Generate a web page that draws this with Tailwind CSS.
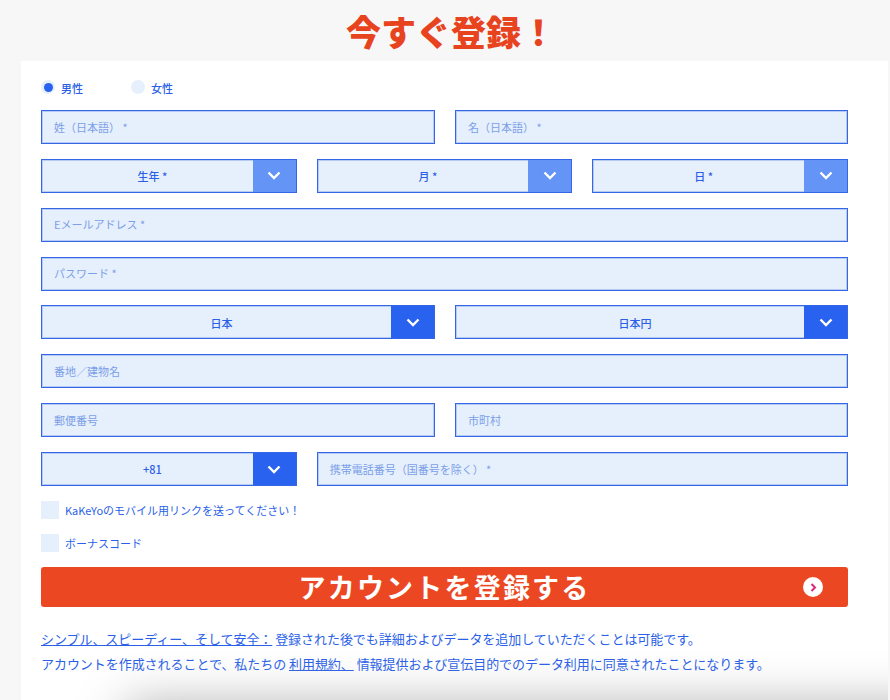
<!DOCTYPE html>
<html lang="ja">
<head>
    <meta charset="UTF-8">
    <title>今すぐ登録！</title>
    <script src="https://cdn.jsdelivr.net/npm/@tailwindcss/browser@4"></script>
</head>
<body class="h-[700px] overflow-hidden bg-[#f7f7f7] font-['Noto_Sans_CJK_JP','Noto_Sans',sans-serif] text-[#2a5fe8]">
    <h1 class="h-[61px] flex justify-center items-center pl-[12px] text-[35px] leading-none font-black text-[#e8431f]">今すぐ登録！</h1>

    <main class="relative ml-[21px] mr-[2px] h-[639px] overflow-hidden bg-white pl-[20px] pr-[40px]">
        <!-- Gender -->
        <div class="flex items-center h-[49px] pt-[5px] text-[11px] font-medium">
            <label class="flex items-center w-[90px]">
                <span class="w-[14px] h-[14px] mr-[6px] -mt-[2px] rounded-full bg-[#e6effc] flex items-center justify-center"><span class="w-[9px] h-[9px] rounded-full bg-[#2a62f0]"></span></span>
                男性
            </label>
            <label class="flex items-center">
                <span class="w-[14px] h-[14px] mr-[6px] -mt-[2px] rounded-full bg-[#e6effc]"></span>
                女性
            </label>
        </div>

        <div class="flex flex-col gap-[14.86px]">
            <div class="grid grid-cols-[394px_1fr] gap-[20px]">
                <div class="h-[34px] flex items-center px-[12px] border border-[#3566e6] shadow-[inset_0_0_0_1px_#b5cbf3] bg-[#e6effc] text-[11px] text-[#7ba0e8]">姓（日本語） *</div>
                <div class="h-[34px] flex items-center px-[12px] border border-[#3566e6] shadow-[inset_0_0_0_1px_#b5cbf3] bg-[#e6effc] text-[11px] text-[#7ba0e8]">名（日本語） *</div>
            </div>

            <div class="grid grid-cols-3 gap-[20px]">
                <div class="h-[34px] flex items-center border border-[#3566e6] shadow-[inset_0_0_0_1px_#b5cbf3] bg-[#e6effc] text-[11px] font-medium">
                    <span class="flex-1 pl-[10px] pt-[1px] text-center">生年 *</span>
                    <span class="w-[43px] h-full flex items-center justify-center bg-[#6494f5]"><svg width="14" height="9" viewBox="0 0 14 9" fill="none" stroke="white" stroke-width="2.4"><path d="M1.5 1.5 7 7l5.500-5.500"/></svg></span>
                </div>
                <div class="h-[34px] flex items-center border border-[#3566e6] shadow-[inset_0_0_0_1px_#b5cbf3] bg-[#e6effc] text-[11px] font-medium">
                    <span class="flex-1 pl-[10px] pt-[1px] text-center">月 *</span>
                    <span class="w-[43px] h-full flex items-center justify-center bg-[#6494f5]"><svg width="14" height="9" viewBox="0 0 14 9" fill="none" stroke="white" stroke-width="2.4"><path d="M1.5 1.5 7 7l5.500-5.500"/></svg></span>
                </div>
                <div class="h-[34px] flex items-center border border-[#3566e6] shadow-[inset_0_0_0_1px_#b5cbf3] bg-[#e6effc] text-[11px] font-medium">
                    <span class="flex-1 pl-[10px] pt-[1px] text-center">日 *</span>
                    <span class="w-[43px] h-full flex items-center justify-center bg-[#6494f5]"><svg width="14" height="9" viewBox="0 0 14 9" fill="none" stroke="white" stroke-width="2.4"><path d="M1.5 1.5 7 7l5.500-5.500"/></svg></span>
                </div>
            </div>

            <div class="h-[34px] flex items-center px-[12px] border border-[#3566e6] shadow-[inset_0_0_0_1px_#b5cbf3] bg-[#e6effc] text-[11px] text-[#7ba0e8]">Eメールアドレス *</div>
            <div class="h-[34px] flex items-center px-[12px] border border-[#3566e6] shadow-[inset_0_0_0_1px_#b5cbf3] bg-[#e6effc] text-[11px] text-[#7ba0e8]">パスワード *</div>

            <div class="grid grid-cols-[394px_1fr] gap-[20px]">
                <div class="h-[34px] flex items-center border border-[#3566e6] shadow-[inset_0_0_0_1px_#b5cbf3] bg-[#e6effc] text-[11px] font-medium">
                    <span class="flex-1 pl-[10px] pt-[1px] text-center">日本</span>
                    <span class="w-[43px] h-full flex items-center justify-center bg-[#2a62f0]"><svg width="14" height="9" viewBox="0 0 14 9" fill="none" stroke="white" stroke-width="2.4"><path d="M1.5 1.5 7 7l5.500-5.500"/></svg></span>
                </div>
                <div class="h-[34px] flex items-center border border-[#3566e6] shadow-[inset_0_0_0_1px_#b5cbf3] bg-[#e6effc] text-[11px] font-medium">
                    <span class="flex-1 pl-[10px] pt-[1px] text-center">日本円</span>
                    <span class="w-[43px] h-full flex items-center justify-center bg-[#2a62f0]"><svg width="14" height="9" viewBox="0 0 14 9" fill="none" stroke="white" stroke-width="2.4"><path d="M1.5 1.5 7 7l5.500-5.500"/></svg></span>
                </div>
            </div>

            <div class="h-[34px] flex items-center px-[12px] border border-[#3566e6] shadow-[inset_0_0_0_1px_#b5cbf3] bg-[#e6effc] text-[11px] text-[#7ba0e8]">番地／建物名</div>

            <div class="grid grid-cols-[394px_1fr] gap-[20px]">
                <div class="h-[34px] flex items-center px-[12px] border border-[#3566e6] shadow-[inset_0_0_0_1px_#b5cbf3] bg-[#e6effc] text-[11px] text-[#7ba0e8]">郵便番号</div>
                <div class="h-[34px] flex items-center px-[12px] border border-[#3566e6] shadow-[inset_0_0_0_1px_#b5cbf3] bg-[#e6effc] text-[11px] text-[#7ba0e8]">市町村</div>
            </div>

            <div class="grid grid-cols-3 gap-[20px]">
                <div class="h-[34px] flex items-center border border-[#3566e6] shadow-[inset_0_0_0_1px_#b5cbf3] bg-[#e6effc] text-[11px] font-medium">
                    <span class="flex-1 pl-[10px] pt-[1px] text-center">+81</span>
                    <span class="w-[43px] h-full flex items-center justify-center bg-[#2a62f0]"><svg width="14" height="9" viewBox="0 0 14 9" fill="none" stroke="white" stroke-width="2.4"><path d="M1.5 1.5 7 7l5.500-5.500"/></svg></span>
                </div>
                <div class="col-span-2 h-[34px] flex items-center px-[12px] border border-[#3566e6] shadow-[inset_0_0_0_1px_#b5cbf3] bg-[#e6effc] text-[11px] text-[#7ba0e8]">携帯電話番号（国番号を除く） *</div>
            </div>
        </div>

        <!-- Options -->
        <label class="flex items-center mt-[15px] text-[11px]">
            <span class="w-[18px] h-[18px] mr-[6px] bg-[#e6effc]"></span>
            KaKeYoのモバイル用リンクを送ってください！
        </label>
        <label class="flex items-center mt-[15px] text-[11px]">
            <span class="w-[18px] h-[18px] mr-[6px] bg-[#e6effc]"></span>
            ボーナスコード
        </label>

        <!-- Submit -->
        <button class="relative w-full h-[40px] mt-[15px] pt-[1px] flex items-center justify-center rounded-[3px] bg-[#ec4723] text-[27px] font-bold tracking-[2.2px] text-white">
            アカウントを登録する
            <span class="absolute right-[25px] top-[10px] w-[20px] h-[20px] rounded-full bg-white flex items-center justify-center"><svg width="7" height="9" viewBox="0 0 7 9" fill="none" stroke="#d8297a" stroke-width="2"><path d="M1.500 1 5 4.500 1.500 8"/></svg></span>
        </button>

        <p class="mt-[19px] text-[13px] leading-[25px] tracking-[-0.05px]"><a class="underline" href="#">シンプル、スピーディー、そして安全：</a> 登録された後でも詳細およびデータを追加していただくことは可能です。</p>
        <p class="text-[13px] leading-[25px] tracking-[-0.05px]">アカウントを作成されることで、私たちの <a class="underline" href="#">利用規約、</a> 情報提供および宣伝目的でのデータ利用に同意されたことになります。</p>

        <!-- next section's shadow creeping in at the fold -->
        <div class="absolute left-[105px] right-[-60px] top-[645px] h-[60px] bg-[#e0e0e0] shadow-[0_0_50px_0_#aaaaaa]"></div>
    </main>
</body>
</html>
